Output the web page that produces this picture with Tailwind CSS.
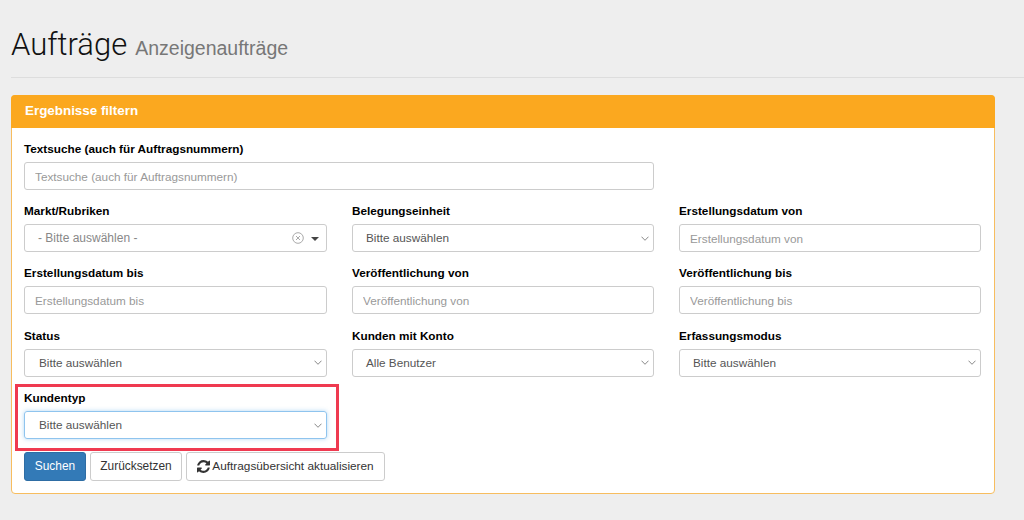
<!DOCTYPE html>
<html lang="de"><head><meta charset="utf-8"><script src="https://cdn.jsdelivr.net/npm/@tailwindcss/browser@4"></script></head>
<body class="bg-[#eeeeee] font-['Liberation_Sans',Arial,sans-serif] text-[11.75px] text-black overflow-hidden">
<div class="w-[1024px] h-[520px] px-[11px] pt-[27px] overflow-hidden">
  <div class="h-[51px] border-b border-[#dddddd] flex items-baseline mr-[-11px]">
    <h1 class="font-['Roboto',sans-serif] font-light text-[31px] leading-[36px] text-[#111]">Aufträge</h1>
    <span class="ml-[8px] text-[19.5px] text-[#777777]">Anzeigenaufträge</span>
  </div>
  <div class="relative mt-[17px] w-[984px] h-[399px] bg-white border border-[#f7bd5f] rounded-[4px]">
    <div class="h-[33px] -mx-px -mt-px bg-[#fba81f] rounded-t-[4px] px-[14px] flex items-center text-white font-bold text-[13.4px]">Ergebnisse filtern</div>
    <div class="px-[12px] pt-[15px]">
      <label class="block font-bold leading-[12px]">Textsuche (auch für Auftragsnummern)</label>
      <input class="block mt-[7px] w-[630px] h-[28px] px-[10px] bg-white border border-[#cccccc] rounded-[3px] text-[11.75px] placeholder:text-[#999999]" placeholder="Textsuche (auch für Auftragsnummern)">
      <div class="grid grid-cols-[303px_302px_302px] gap-x-[25px] gap-y-[15.4px] mt-[15px] w-[957px]">
        <div><label class="block font-bold leading-[12px]">Markt/Rubriken</label>
          <div class="mt-[7px] h-[28px] pl-[13px] pr-[7px] border border-[#cccccc] rounded-[3px] flex items-center text-[#888888]"><span class="flex-1 text-[12px]">- Bitte auswählen -</span>
            <svg class="w-[12px] h-[12px] mr-[7px]" viewBox="0 0 12 12" fill="none" stroke="#aaaaaa"><circle cx="6" cy="6" r="5.300"/><path d="M4 4l4 4M8 4l-4 4"/></svg>
            <span class="mt-[1px] w-0 h-0 border-x-[4px] border-x-transparent border-t-[4px] border-t-[#444444]"></span></div></div>
        <div><label class="block font-bold leading-[12px]">Belegungseinheit</label>
          <div class="mt-[7px] h-[28px] pl-[13px] pr-[4px] border border-[#cccccc] rounded-[3px] flex items-center justify-between text-[#555555]"><span>Bitte auswählen</span><svg class="w-[8px] h-[5px]" viewBox="0 0 8 5" fill="none" stroke="#888888"><path d="M.5 .7L4 4.300 7.500 .7"/></svg></div></div>
        <div><label class="block font-bold leading-[12px]">Erstellungsdatum von</label>
          <input class="block mt-[7px] w-full h-[28px] px-[10px] border border-[#cccccc] rounded-[3px] text-[11.75px] placeholder:text-[#999999]" placeholder="Erstellungsdatum von"></div>
        <div><label class="block font-bold leading-[12px]">Erstellungsdatum bis</label>
          <input class="block mt-[7px] w-full h-[28px] px-[10px] border border-[#cccccc] rounded-[3px] text-[11.75px] placeholder:text-[#999999]" placeholder="Erstellungsdatum bis"></div>
        <div><label class="block font-bold leading-[12px]">Veröffentlichung von</label>
          <input class="block mt-[7px] w-full h-[28px] px-[10px] border border-[#cccccc] rounded-[3px] text-[11.75px] placeholder:text-[#999999]" placeholder="Veröffentlichung von"></div>
        <div><label class="block font-bold leading-[12px]">Veröffentlichung bis</label>
          <input class="block mt-[7px] w-full h-[28px] px-[10px] border border-[#cccccc] rounded-[3px] text-[11.75px] placeholder:text-[#999999]" placeholder="Veröffentlichung bis"></div>
        <div><label class="block font-bold leading-[12px]">Status</label>
          <div class="mt-[7px] h-[28px] pl-[14px] pr-[4px] border border-[#cccccc] rounded-[3px] flex items-center justify-between text-[#555555]"><span>Bitte auswählen</span><svg class="w-[8px] h-[5px]" viewBox="0 0 8 5" fill="none" stroke="#888888"><path d="M.5 .7L4 4.300 7.500 .7"/></svg></div></div>
        <div><label class="block font-bold leading-[12px]">Kunden mit Konto</label>
          <div class="mt-[7px] h-[28px] pl-[13px] pr-[4px] border border-[#cccccc] rounded-[3px] flex items-center justify-between text-[#555555]"><span>Alle Benutzer</span><svg class="w-[8px] h-[5px]" viewBox="0 0 8 5" fill="none" stroke="#888888"><path d="M.5 .7L4 4.300 7.500 .7"/></svg></div></div>
        <div><label class="block font-bold leading-[12px]">Erfassungsmodus</label>
          <div class="mt-[7px] h-[28px] pl-[13px] pr-[4px] border border-[#cccccc] rounded-[3px] flex items-center justify-between text-[#555555]"><span>Bitte auswählen</span><svg class="w-[8px] h-[5px]" viewBox="0 0 8 5" fill="none" stroke="#888888"><path d="M.5 .7L4 4.300 7.500 .7"/></svg></div></div>
        <div><label class="block font-bold leading-[12px]">Kundentyp</label>
          <div class="mt-[7px] h-[28px] pl-[14px] pr-[4px] border border-[#8fc4ee] shadow-[0_0_4px_rgba(102,175,233,0.5)] rounded-[3px] flex items-center justify-between text-[#555555]"><span>Bitte auswählen</span><svg class="w-[8px] h-[5px]" viewBox="0 0 8 5" fill="none" stroke="#888888"><path d="M.5 .7L4 4.300 7.500 .7"/></svg></div></div>
      </div>
      <div class="flex gap-[4px] mt-[13px]">
        <button class="w-[62px] h-[29px] bg-[#337ab7] border border-[#2e6da4] rounded-[3px] text-white text-[11.9px]">Suchen</button>
        <button class="w-[92px] h-[29px] bg-white border border-[#cccccc] rounded-[3px] text-[#333333] text-[11.9px]">Zurücksetzen</button>
        <button class="w-[199px] h-[29px] bg-white border border-[#cccccc] rounded-[3px] text-[#333333] text-[11.8px] flex items-center justify-center gap-[2px]">
          <svg class="w-[13px] h-[13px]" viewBox="0 0 1536 1536" fill="#333333"><path d="M1511 928q0 5-1 7-64 268-268 434.500T764 1536q-146 0-282.500-55T238 1324l-129 129q-19 19-45 19t-45-19-19-45V960q0-26 19-45t45-19h448q26 0 45 19t19 45-19 45l-137 137q71 66 161 102t187 36q134 0 250-65t186-179q11-17 53-117 8-23 30-23h192q13 0 22.500 9.500t9.500 22.500zm25-800v448q0 26-19 45t-45 19h-448q-26 0-45-19t-19-45 19-45l138-138Q969 256 768 256q-134 0-250 65T332 500q-11 17-53 117-8 23-30 23H50q-13 0-22.500-9.500T18 608v-7q65-268 270-434.500T768 0q146 0 284 55.500T1297 212l130-129q19-19 45-19t45 19 19 45z"/></svg>
          Auftragsübersicht aktualisieren</button>
      </div>
    </div>
    <div class="absolute left-[3px] top-[288px] w-[324px] h-[67px] border-[3px] border-[#ef3a50] pointer-events-none"></div>
  </div>
</div>
</body></html>
